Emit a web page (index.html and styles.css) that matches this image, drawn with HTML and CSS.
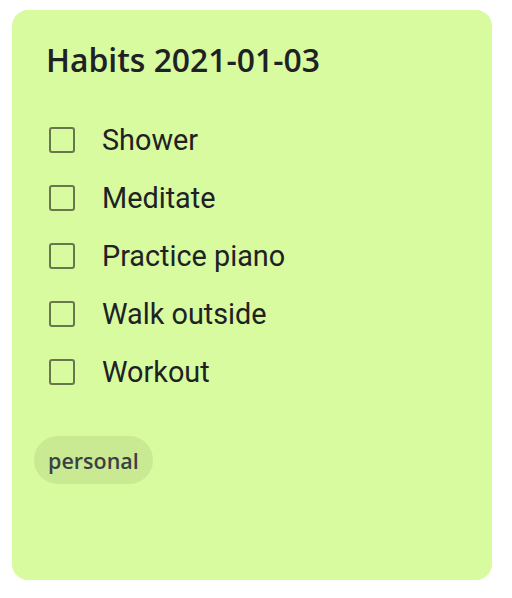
FILE: index.html
```html
<!DOCTYPE html>
<html>
<head>
<meta charset="utf-8">
<link rel="stylesheet" href="styles.css">
</head>
<body>
<div class="card">
  <h1 class="title">Habits 2021-01-03</h1>
  <ul class="list">
    <li class="item"><span class="box"></span><span class="label">Shower</span></li>
    <li class="item"><span class="box"></span><span class="label">Meditate</span></li>
    <li class="item"><span class="box"></span><span class="label">Practice piano</span></li>
    <li class="item"><span class="box"></span><span class="label">Walk outside</span></li>
    <li class="item"><span class="box"></span><span class="label">Workout</span></li>
  </ul>
  <div class="chips"><span class="chip">personal</span></div>
</div>
</body>
</html>
```
FILE: styles.css
```css
html, body { margin: 0; padding: 0; background: #ffffff; }
body { width: 512px; height: 598px; }
.card {
  margin: 10px 0 0 12px;
  width: 480px;
  height: 570px;
  box-sizing: border-box;
  background: #d7fb9e;
  border-radius: 16px;
  padding: 32px 22px 0 22px;
}
.title {
  margin: 0 0 0 12px;
  font-family: "Open Sans", sans-serif;
  font-weight: 600;
  font-size: 31.9px;
  line-height: 36px;
  color: #202124;
}
.list { list-style: none; margin: 33px 0 0 0; padding: 0; }
.item {
  display: flex;
  align-items: center;
  height: 58px;
  padding-left: 15px;
}
.box {
  box-sizing: border-box;
  width: 26px;
  height: 26px;
  border: 2.5px solid #68774d;
  border-radius: 3px;
  flex: none;
}
.label {
  margin-left: 27px;
  font-family: Roboto, sans-serif;
  font-size: 28.8px;
  color: #202124;
}
.chips { margin-top: 35px; display: flex; }
.chip {
  display: inline-flex;
  align-items: center;
  height: 48px;
  padding: 0 14px;
  border-radius: 24px;
  background: #c9ea93;
  font-family: "Open Sans", sans-serif;
  font-weight: 600;
  font-size: 21.5px;
  color: #3c4043;
}
```
